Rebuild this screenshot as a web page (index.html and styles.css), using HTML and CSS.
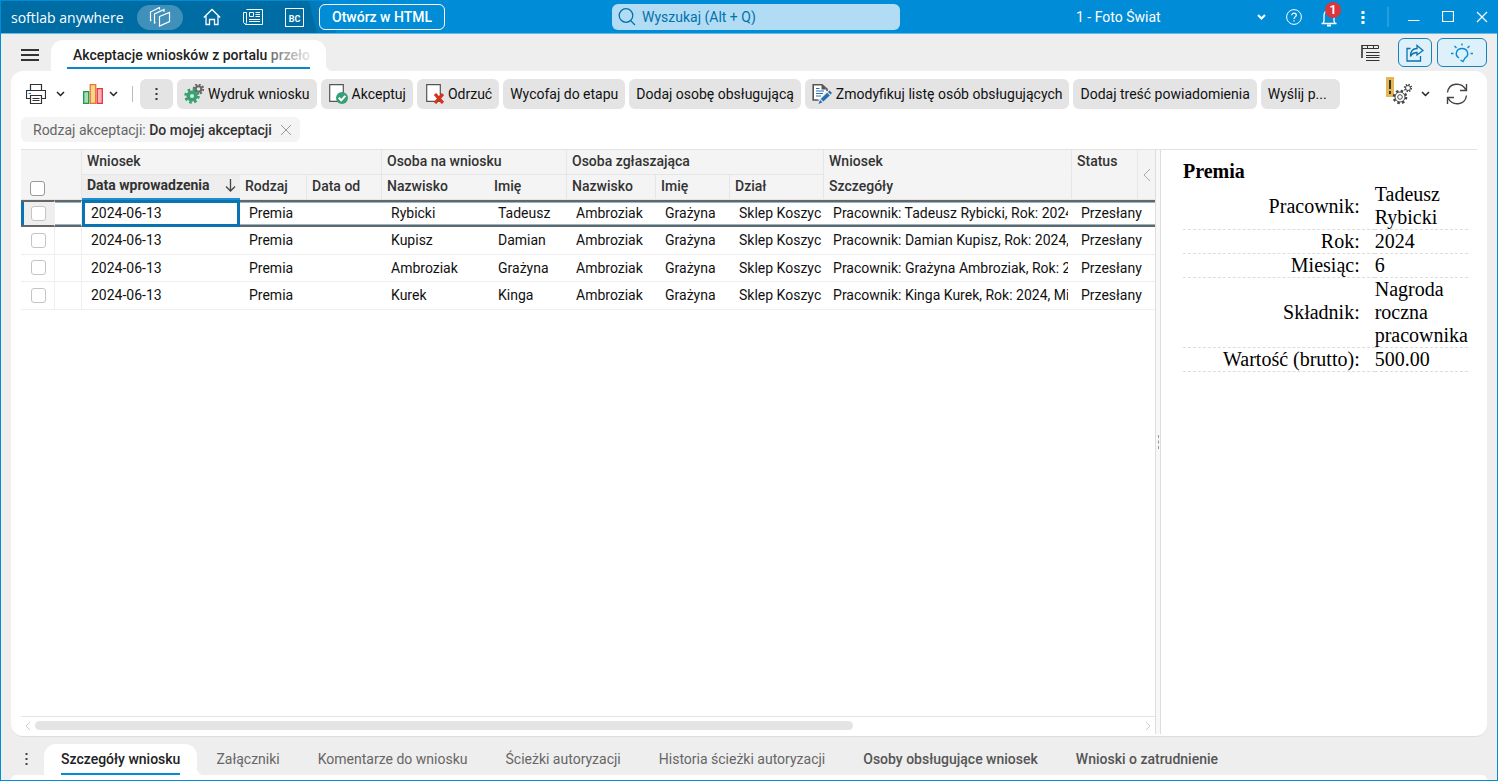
FILE: index.html
```html
<!DOCTYPE html>
<html lang="pl">
<head>
    <meta charset="utf-8">
    <title>softlab anywhere</title>
    <link rel="stylesheet" href="styles.css">
</head>
<body>
    <!-- Pasek tytułu -->
    <header class="topbar">
        <div class="topbar-left">
            <span class="logo">softlab anywhere</span>
            <button class="pill" aria-label="Moduły">
                <svg width="22" height="20" viewBox="0 0 22 20" fill="none" stroke="currentColor" stroke-width="1.200">
                    <path d="M10.500 9.500L20.500 5.500V14.500L10.500 19V9.500ZM6.500 15.500L5.500 16V7L15 2.500V5M2.500 13L1.500 13.500V5L10.500 .5V2.500"/>
                </svg>
            </button>
            <button class="top-icon icon-home" aria-label="Start">
                <svg width="18" height="18" viewBox="0 0 18 18" fill="none" stroke="currentColor">
                    <path d="M.8 9.500L9 1.500L17.200 9.500M3 8V16.500H6.500V11.500H11.500V16.500H15V8" stroke-width="1.300"/>
                </svg>
            </button>
            <button class="top-icon" aria-label="Aktualności">
                <svg width="20" height="16" viewBox="0 0 20 16" fill="none" stroke="currentColor">
                    <path d="M3.500 .5H19.500V15.500H2.500L.5 13.500V3.500H3.500V13.500L2.500 15.500M6.500 3.500H10.500V7.500H6.500ZM12.500 3.500H17M12.500 5.500H17M12.500 7.500H17M6 10.500H17M6 12.500H17"/>
                </svg>
            </button>
            <button class="top-icon bc" aria-label="BC">BC</button>
            <button class="open-html">Otwórz w HTML</button>
        </div>
        <label class="search">
            <svg width="18" height="18" viewBox="0 0 18 18" fill="none" stroke="currentColor" stroke-width="1.300">
                <circle cx="8" cy="7.500" r="6.800"/><path d="M12.500 12.500L17 17"/>
            </svg>
            <input type="text" placeholder="Wyszukaj (Alt + Q)" aria-label="Wyszukaj">
        </label>
        <div class="topbar-right">
            <span class="company">
                <select aria-label="Firma"><option>1 - Foto Świat</option></select>
                <svg width="9" height="6" viewBox="0 0 9 6" fill="none" stroke="currentColor" stroke-width="2"><path d="M1 1L4.500 4.500L8 1"/></svg>
            </span>
            <button class="top-icon" aria-label="Pomoc">
                <svg width="16" height="16" viewBox="0 0 16 16" fill="none" stroke="currentColor">
                    <circle cx="8" cy="8" r="7.400"/><path d="M5.800 6.300C5.800 3.300 10.300 3.500 10.300 6.200C10.300 8 8 7.800 8 10M8 11.300V12.500" stroke-width="1.200"/>
                </svg>
            </button>
            <button class="top-icon bell" aria-label="Powiadomienia">
                <svg width="16" height="19" viewBox="0 0 16 19" fill="none" stroke="currentColor" stroke-width="1.300">
                    <path d="M.5 15.500H15.500M2 15.500L3 13V7.500C3 .5 13 .5 13 7.500V13L14 15.500"/><path d="M6 17.500H10" stroke-width="2"/>
                </svg>
                <span class="badge">1</span>
            </button>
            <button class="top-icon" aria-label="Więcej">
                <svg width="4" height="14" viewBox="0 0 4 14" fill="currentColor"><path d="M.5 1h3v3h-3zM.5 6h3v3h-3zM.5 11h3v3h-3z"/></svg>
            </button>
            <span class="top-sep"></span>
            <button class="top-icon" aria-label="Minimalizuj">
                <svg width="12" height="12" viewBox="0 0 12 12" stroke="currentColor"><path d="M0 9.500H11.500"/></svg>
            </button>
            <button class="top-icon" aria-label="Maksymalizuj">
                <svg width="12" height="12" viewBox="0 0 12 12" fill="none" stroke="currentColor"><path d="M.5 .5H11.500V10.500H.5Z" stroke-width="1.200"/></svg>
            </button>
            <button class="top-icon" aria-label="Zamknij">
                <svg width="12" height="12" viewBox="0 0 12 12" stroke="currentColor" stroke-width="1.200"><path d="M1 1L11 11M11 1L1 11"/></svg>
            </button>
        </div>
    </header>

    <!-- Otwarte okna -->
    <div class="window-tabs">
        <button class="hamburger" aria-label="Menu"><span></span><span></span><span></span></button>
        <a href="#" class="window-tab"><span>Akceptacje wniosków z portalu przełożonego</span></a>
        <div class="window-actions">
            <button class="plain" aria-label="Układ">
                <svg width="19" height="18" viewBox="0 0 19 18" fill="none" stroke="#333">
                    <path d="M1 1V14" stroke-width="1.600"/>
                    <path d="M1 1.500H17.500V4.500H1M6.500 1V5M12.500 1V5"/>
                    <path d="M5 8.500H18.500M5 11.500H18.500M5 13.500H18.500M5 16.500H18.500"/>
                </svg>
            </button>
            <button class="action-btn share" aria-label="Udostępnij">
                <svg width="18" height="18" viewBox="0 0 18 18" fill="none" stroke="currentColor" stroke-width="1.300">
                    <path d="M4.500 4.500H1V17H14.500V12"/><path d="M11 1.500L17 6.500L11 11V8.500C8 8.500 6 9.500 4.500 12.500C4.500 7.500 7 4.500 11 4.500Z"/>
                </svg>
            </button>
            <button class="action-btn bulb" aria-label="Podpowiedzi">
                <svg width="22" height="20" viewBox="0 0 22 20" fill="none" stroke="currentColor" stroke-width="1.400">
                    <path d="M8 15C3 12 5.500 5.500 11 5.500C16.500 5.500 19 12 14 15L12 18.500L9.500 17M11 .5V2.500M3.500 3L5.500 5M18.500 3L16.500 5M0 10.500H2.500M19.500 10.500H22"/>
                </svg>
            </button>
        </div>
    </div>

    <main class="panel">
        <div class="toolbar">
            <button class="plain" aria-label="Drukuj">
                <svg width="20" height="20" viewBox="0 0 20 20" fill="none" stroke="#333">
                    <path d="M4.500 6.500V.5H15.500V6.500M4.500 14.500H.5V6.500H19.500V14.500H15.500M4.500 11.500H15.500V19.500H4.500ZM6.500 14.500H13.500M6.500 16.500H13.500" stroke-width="1.200"/>
                    <path d="M2.500 9.500H5" stroke="#0a84d0"/>
                </svg>
                <svg class="chev" width="9" height="6" viewBox="0 0 9 6" fill="none" stroke="#222" stroke-width="1.500"><path d="M1 1L4.500 4.500L8 1"/></svg>
            </button>
            <button class="plain chart" aria-label="Wykres">
                <svg width="20" height="20" viewBox="0 0 20 20" stroke-width="1.300">
                    <path d="M.7 7.700H5.700V19.300H.7Z" fill="#a8dcb8" stroke="#179c4c"/>
                    <path d="M7.200 .7H12.700V19.300H7.200Z" fill="#fbd38c" stroke="#e8772e"/>
                    <path d="M14.200 4.700H19.300V19.300H14.200Z" fill="#f6b3b6" stroke="#e5353f"/>
                </svg>
                <svg class="chev" width="9" height="6" viewBox="0 0 9 6" fill="none" stroke="#222" stroke-width="1.500"><path d="M1 1L4.500 4.500L8 1"/></svg>
            </button>
            <span class="tool-sep"></span>
            <div class="buttons">
                <button class="btn btn-dots" aria-label="Więcej">
                    <svg width="3" height="13" viewBox="0 0 3 13" fill="#333"><path d="M.5 0h2v2h-2zM.5 5h2v2h-2zM.5 10h2v2h-2z"/></svg>
                </button>
                <button class="btn">
                    <svg width="20" height="20" viewBox="0 0 20 20" fill="none">
                        <circle cx="14.500" cy="5" r="4.500" stroke="#666" stroke-width="2.500" stroke-dasharray="1.800 1.700"/>
                        <circle cx="14.500" cy="5" r="2.800" stroke="#666" stroke-width="2"/>
                        <circle cx="8" cy="12" r="6" stroke="#36a171" stroke-width="3.500" stroke-dasharray="2.400 2.300"/>
                        <circle cx="8" cy="12" r="3.800" fill="#e4e4e4" stroke="#36a171" stroke-width="3.600"/>
                    </svg>
                    Wydruk wniosku
                </button>
                <button class="btn">
                    <svg width="20" height="20" viewBox="0 0 20 20">
                        <path d="M1.700 .7H15.300V17.300H1.700Z" fill="#fff" stroke="#555" stroke-width="1.200"/>
                        <circle cx="14" cy="14" r="6" fill="#369f78"/>
                        <path d="M10.800 13.800L13.200 16.300L17.300 11.800" fill="none" stroke="#fff" stroke-width="2"/>
                    </svg>
                    Akceptuj
                </button>
                <button class="btn">
                    <svg width="20" height="20" viewBox="0 0 20 20">
                        <path d="M2.700 .7H16.300V17.300H2.700Z" fill="#fff" stroke="#555" stroke-width="1.200"/>
                        <path d="M11 10L19 19M19 10L11 19" stroke="#d2311c" stroke-width="3.200"/>
                    </svg>
                    Odrzuć
                </button>
                <button class="btn">Wycofaj do etapu</button>
                <button class="btn">Dodaj osobę obsługującą</button>
                <button class="btn">
                    <svg width="20" height="20" viewBox="0 0 20 20">
                        <path d="M6.500 16H1.200V.8H10L15 5V7" fill="#fff" stroke="#555" stroke-width="1.600"/>
                        <path d="M9.500 1V5.500H14.500Z" fill="#555"/>
                        <path d="M4 4.500H7.500M4 7H12M4 9.500H11M4 12H9" stroke="#2d70b3" stroke-width="1.100"/>
                        <path d="M17.500 6.500L20 9L18.500 10.500L16 8ZM15.200 8.800L17.800 11.400L11.300 17.500L8.800 15ZM8 16L10.500 18.300L6.500 20Z" fill="#256fb5"/>
                    </svg>
                    Zmodyfikuj listę osób obsługujących
                </button>
                <button class="btn">Dodaj treść powiadomienia</button>
                <button class="btn btn-last">Wyślij p...</button>
            </div>
            <button class="plain settings" aria-label="Ustawienia">
                <svg width="26" height="34" viewBox="0 0 26 34" fill="none" stroke="#444">
                    <path d="M0 0H8V20H0Z" fill="#e4b755" stroke="none"/>
                    <path d="M4 3V12M4 14V17" stroke="#3d3520" stroke-width="2"/>
                    <circle cx="14" cy="20" r="6" stroke-width="2.600" stroke-dasharray="2.400 2.310"/>
                    <circle cx="14" cy="20" r="5" fill="#fff"/><circle cx="14" cy="20" r="2.300"/>
                    <circle cx="22" cy="11" r="3.200" stroke-width="2" stroke-dasharray="1.300 1.210"/>
                    <circle cx="22" cy="11" r="2.500" fill="#fff"/>
                </svg>
                <svg class="chev" width="9" height="6" viewBox="0 0 9 6" fill="none" stroke="#222" stroke-width="1.500"><path d="M1 1L4.500 4.500L8 1"/></svg>
            </button>
            <button class="plain" aria-label="Odśwież">
                <svg width="22" height="22" viewBox="0 0 22 22" fill="none" stroke="#444" stroke-width="1.400">
                    <path d="M1.500 9.500C3 -.5 15.500 -1.500 20 7M20.500 1V7.500H14M20.500 12.500C19 22.500 6.500 23.500 2 15M1.500 21V14.500H8"/>
                </svg>
            </button>
        </div>

        <div class="filters">
            <div class="chip">
                <span>Rodzaj akceptacji: <b>Do mojej akceptacji</b></span>
                <button aria-label="Usuń filtr">
                    <svg width="12" height="12" viewBox="0 0 12 12" stroke="#999"><path d="M1 1L11 11M11 1L1 11"/></svg>
                </button>
            </div>
        </div>

        <div class="content">
            <section class="grid-pane">
                <table class="grid">
                    <colgroup>
                        <col class="c-check"><col class="c-mark"><col class="c-date"><col class="c-kind"><col class="c-from">
                        <col class="c-name"><col class="c-first"><col class="c-rname"><col class="c-rfirst"><col class="c-dept">
                        <col class="c-details"><col class="c-status"><col class="c-more">
                    </colgroup>
                    <thead>
                        <tr>
                            <th colspan="2" rowspan="2" class="check-head"><input type="checkbox" aria-label="Zaznacz wszystkie"></th>
                            <th colspan="3">Wniosek</th>
                            <th colspan="2">Osoba na wniosku</th>
                            <th colspan="3">Osoba zgłaszająca</th>
                            <th class="no-line">Wniosek</th>
                            <th rowspan="2" class="status-head">Status</th>
                            <th rowspan="2" class="more-head">
                                <button aria-label="Zwiń"><svg width="8" height="14" viewBox="0 0 8 14" fill="none" stroke="#aaa"><path d="M7 1L1 7L7 13"/></svg></button>
                            </th>
                        </tr>
                        <tr>
                            <th class="sorted">
                                <div><span>Data wprowadzenia</span>
                                <svg width="11" height="13" viewBox="0 0 11 13" fill="none" stroke="#444" stroke-width="1.300"><path d="M5.500 0V12M1 7.500L5.500 12L10 7.500"/></svg></div>
                            </th>
                            <th>Rodzaj</th>
                            <th>Data od</th>
                            <th class="no-side">Nazwisko</th>
                            <th>Imię</th>
                            <th>Nazwisko</th>
                            <th>Imię</th>
                            <th>Dział</th>
                            <th>Szczegóły</th>
                        </tr>
                    </thead>
                    <tbody>
                        <tr class="selected">
                            <td><input type="checkbox" aria-label="Rybicki"></td><td></td>
                            <td class="focused">2024-06-13</td><td>Premia</td><td></td><td>Rybicki</td><td>Tadeusz</td>
                            <td>Ambroziak</td><td>Grażyna</td><td>Sklep Koszyc</td>
                            <td><div class="clip">Pracownik: Tadeusz Rybicki, Rok: 2024</div></td><td colspan="2">Przesłany</td>
                        </tr>
                        <tr>
                            <td><input type="checkbox" aria-label="Kupisz"></td><td></td>
                            <td>2024-06-13</td><td>Premia</td><td></td><td>Kupisz</td><td>Damian</td>
                            <td>Ambroziak</td><td>Grażyna</td><td>Sklep Koszyc</td>
                            <td><div class="clip">Pracownik: Damian Kupisz, Rok: 2024,</div></td><td colspan="2">Przesłany</td>
                        </tr>
                        <tr>
                            <td><input type="checkbox" aria-label="Ambroziak"></td><td></td>
                            <td>2024-06-13</td><td>Premia</td><td></td><td>Ambroziak</td><td>Grażyna</td>
                            <td>Ambroziak</td><td>Grażyna</td><td>Sklep Koszyc</td>
                            <td><div class="clip">Pracownik: Grażyna Ambroziak, Rok: 20</div></td><td colspan="2">Przesłany</td>
                        </tr>
                        <tr>
                            <td><input type="checkbox" aria-label="Kurek"></td><td></td>
                            <td>2024-06-13</td><td>Premia</td><td></td><td>Kurek</td><td>Kinga</td>
                            <td>Ambroziak</td><td>Grażyna</td><td>Sklep Koszyc</td>
                            <td><div class="clip">Pracownik: Kinga Kurek, Rok: 2024, Mie</div></td><td colspan="2">Przesłany</td>
                        </tr>
                    </tbody>
                </table>
                <div class="scrollbar">
                    <svg width="6" height="8" viewBox="0 0 6 8" fill="none" stroke="#ccc"><path d="M5 0L1 4L5 8"/></svg>
                    <div class="track"><div class="thumb"></div></div>
                    <svg width="6" height="8" viewBox="0 0 6 8" fill="none" stroke="#ccc"><path d="M1 0L5 4L1 8"/></svg>
                </div>
            </section>
            <div class="splitter"><span></span></div>
            <aside class="details">
                <h2>Premia</h2>
                <table>
                    <tr><th>Pracownik:</th><td>Tadeusz Rybicki</td></tr>
                    <tr><th>Rok:</th><td>2024</td></tr>
                    <tr><th>Miesiąc:</th><td>6</td></tr>
                    <tr><th>Składnik:</th><td>Nagroda roczna pracownika</td></tr>
                    <tr><th>Wartość (brutto):</th><td>500.00</td></tr>
                </table>
            </aside>
        </div>
    </main>

    <!-- Zakładki szczegółów -->
    <nav class="bottom-tabs">
        <button class="plain dots" aria-label="Zakładki">
            <svg width="3" height="13" viewBox="0 0 3 13" fill="#444"><path d="M.5 0h2v2h-2zM.5 5h2v2h-2zM.5 10h2v2h-2z"/></svg>
        </button>
        <a href="#" class="active"><span>Szczegóły wniosku</span></a>
        <a href="#">Załączniki</a>
        <a href="#">Komentarze do wniosku</a>
        <a href="#">Ścieżki autoryzacji</a>
        <a href="#">Historia ścieżki autoryzacji</a>
        <a href="#" class="filled">Osoby obsługujące wniosek</a>
        <a href="#" class="filled">Wnioski o zatrudnienie</a>
    </nav>
    <div class="bottom-panel"></div>
</body>
</html>
```

FILE: styles.css
```css
* {
    box-sizing: border-box;
}
body {
    margin: 0;
    height: 100vh;
    display: flex;
    flex-direction: column;
    border: 1px solid #008cd6;
    background-color: #eee;
    font-family: Roboto, sans-serif;
    font-size: 14px;
    color: #222;
    overflow: hidden;
}
button, select, input {
    font: inherit;
    color: inherit;
}
button {
    padding: 0;
    border: none;
    background: none;
    cursor: pointer;
}
svg {
    display: block;
    flex: none;
}

/* Pasek tytułu */
.topbar {
    display: grid;
    grid-template-columns: minmax(0, 1fr) 288px 597px;
    align-items: center;
    flex: none;
    height: 33px;
    padding-left: 10px;
    border-bottom: 1px solid #66bae7;
    background: linear-gradient(75deg, #006ca4 305px, #0079b8 306px, #0080c3 324px, #008cd6 325px);
    color: white;
}
.topbar-left, .topbar-right {
    display: flex;
    align-items: center;
}
.logo {
    width: 116px;
    margin-right: 10px;
    font-family: "Open Sans", sans-serif;
    font-size: 14px;
    white-space: nowrap;
}
.pill {
    display: flex;
    align-items: center;
    justify-content: center;
    width: 46px;
    height: 25px;
    margin-right: 20px;
    border-radius: 13px;
    background-color: #4090bc;
}
.top-icon {
    display: flex;
    align-items: center;
    justify-content: center;
    position: relative;
}
.topbar-left .top-icon {
    margin-right: 22px;
}
.topbar-left .bc {
    align-items: flex-end;
    width: 19px;
    height: 19px;
    margin-right: 15px;
    border: 1px solid white;
    font-size: 9px;
    font-weight: bold;
    line-height: 13px;
}
.open-html {
    height: 26px;
    padding: 0 12px;
    border: 1px solid white;
    border-radius: 6px;
    background-color: #008cd6;
    font-weight: 500;
}
.search {
    display: flex;
    align-items: center;
    gap: 4px;
    height: 26px;
    padding: 0 6px;
    border-radius: 6px;
    background-color: #b2dcf3;
    color: #0072ad;
}
.search input {
    flex: 1;
    min-width: 0;
    border: none;
    background: none;
    outline: none;
}
.search input::placeholder {
    color: #0072ad;
    opacity: 1;
}
.topbar-right {
    justify-content: flex-end;
    padding-right: 9px;
}
.company {
    display: flex;
    align-items: center;
    width: 190px;
    margin-right: 20px;
}
.company select {
    flex: 1;
    appearance: none;
    padding: 0;
    border: none;
    outline: none;
    background: none;
}
.bell {
    margin-left: 19px;
    margin-right: 24px;
}
.badge {
    position: absolute;
    left: 4px;
    top: -6px;
    width: 16px;
    height: 16px;
    border-radius: 8px;
    background-color: #d9363e;
    font-size: 12px;
    font-weight: bold;
    line-height: 16px;
}
.top-sep {
    width: 2px;
    height: 20px;
    margin: 0 19px 0 22px;
    background-color: #269ddc;
}
.top-sep ~ .top-icon + .top-icon {
    margin-left: 22px;
}

/* Okna */
.window-tabs {
    display: flex;
    align-items: flex-end;
    flex: none;
    height: 37px;
    padding: 0 10px;
}
.hamburger {
    display: flex;
    flex-direction: column;
    gap: 3px;
    width: 18px;
    margin: 0 12px 10px 10px;
}
.hamburger span {
    height: 2px;
    background-color: #333;
}
.window-tab {
    position: relative;
    width: 275px;
    height: 31px;
    padding: 0 16px;
    border-radius: 12px 12px 0 0;
    background-color: white;
    color: #222;
    font-weight: 500;
    text-decoration: none;
}
.window-tab span {
    display: block;
    height: 29px;
    padding-left: 6px;
    border-bottom: 2px solid #0a86cc;
    overflow: hidden;
    line-height: 30px;
    white-space: nowrap;
}
.window-tab span::after {
    content: "";
    position: absolute;
    right: 16px;
    top: 4px;
    width: 42px;
    height: 20px;
    background: linear-gradient(to right, rgba(255, 255, 255, 0.3), rgba(255, 255, 255, 0.9));
}
.window-tab::after, .bottom-tabs .active::after {
    content: "";
    position: absolute;
    left: 100%;
    bottom: 0;
    width: 8px;
    height: 8px;
    background: radial-gradient(circle at 8px 0, transparent 8px, white 9px);
}
.window-actions {
    display: flex;
    align-items: center;
    gap: 5px;
    margin-left: auto;
    padding-bottom: 4px;
}
.plain {
    display: flex;
    align-items: center;
}
.window-actions .plain {
    margin-right: 13px;
}
.action-btn {
    display: flex;
    align-items: center;
    justify-content: center;
    width: 34px;
    height: 29px;
    border: 1px solid #1482bd;
    border-radius: 6px;
    background-color: #def0fa;
    color: #0873ad;
}
.bulb {
    width: 50px;
    color: #008cd6;
}

/* Panel */
.panel {
    display: flex;
    flex-direction: column;
    flex: 1;
    min-height: 0;
    margin: 0 10px;
    padding: 8px 10px 2px;
    border-bottom: 1px solid #ddd;
    border-radius: 12px;
    background-color: white;
}
.toolbar {
    display: flex;
    align-items: center;
    height: 30px;
    padding: 0 9px 0 5px;
}
.chev {
    margin-left: 10px;
}
.chart {
    margin-left: 18px;
}
.chart .chev, .settings .chev {
    margin-left: 9px;
}
.chart .chev {
    margin-left: 6px;
}
.tool-sep {
    width: 1px;
    height: 16px;
    margin: 0 7px 0 14px;
    background-color: #bbb;
}
.buttons {
    display: flex;
    gap: 4px;
}
.btn {
    display: flex;
    align-items: center;
    gap: 4px;
    height: 30px;
    padding: 0 7px;
    border-radius: 6px;
    background-color: #e4e4e4;
    color: #111;
    white-space: nowrap;
}
.btn-dots {
    justify-content: center;
    width: 33px;
}
.btn-last {
    padding-right: 13px;
}
.settings {
    margin-left: auto;
    margin-right: 16px;
}
.filters {
    display: flex;
    padding: 8px 0 7px;
}
.chip {
    display: flex;
    align-items: center;
    gap: 8px;
    height: 25px;
    padding: 0 8px 0 12px;
    border-radius: 6px;
    background-color: #f4f4f4;
    color: #666;
}
.chip b {
    color: #333;
    font-weight: 500;
}
.content {
    display: flex;
    flex: 1;
    min-height: 0;
    border-top: 1px solid #e2e2e2;
}

/* Tabela */
.grid-pane {
    display: flex;
    flex-direction: column;
    flex: 1;
    min-width: 0;
}
.grid {
    width: 100%;
    table-layout: fixed;
    border-collapse: separate;
    border-spacing: 0;
}
.c-check { width: 34px; }
.c-mark { width: 27px; }
.c-date { width: 158px; }
.c-kind { width: 67px; }
.c-from { width: 75px; }
.c-name { width: 107px; }
.c-first { width: 78px; }
.c-rname { width: 89px; }
.c-rfirst { width: 74px; }
.c-dept { width: 94px; }
.c-status { width: 66px; }
.c-more { width: 17px; }
.grid th {
    height: 25px;
    padding: 0 0 3px 5px;
    border-right: 1px solid #e6e6e6;
    border-bottom: 1px solid #e6e6e6;
    background-color: #f4f4f4;
    color: #333;
    font-weight: 500;
    text-align: left;
    white-space: nowrap;
}
.grid th.no-line {
    border-bottom-color: #f4f4f4;
}
.grid th.no-side {
    border-right-color: #f4f4f4;
}
.grid th.check-head {
    padding: 0 0 3px 9px;
    vertical-align: bottom;
}
.grid th.status-head {
    padding-top: 3px;
    vertical-align: top;
}
.grid th.more-head {
    padding: 0;
    border-right: none;
}
.more-head button {
    display: block;
    margin: 0 auto;
}
.grid th.sorted {
    border-right: none;
    border-bottom: 2px solid #1b8fd0;
    background-color: #eee;
    font-weight: bold;
}
.sorted div {
    display: flex;
    align-items: center;
    justify-content: space-between;
    padding-right: 4px;
}
.grid td {
    height: 27px;
    padding: 0 4px 1px 9px;
    border-bottom: 1px solid #eee;
    color: #111;
    white-space: nowrap;
}
.grid tr:nth-child(2) td, .grid tr:nth-child(4) td {
    height: 28px;
}
.grid td:nth-child(-n+2) {
    border-right: 1px solid #eee;
}
.grid td:first-child {
    padding-left: 10px;
}
.clip {
    overflow: hidden;
}
.grid .selected td {
    border-top: 2px solid #666;
    border-bottom: 2px solid #666;
    box-shadow: inset 0 1px #8db9cf, inset 0 -1px #8db9cf;
}
.grid .selected td:first-child {
    background-color: #eee;
    box-shadow: inset 3px 0 #0a73b0;
}
.grid .selected td.focused {
    border-color: #0a73b0;
    box-shadow: inset 3px 0 #0a73b0, inset -3px 0 #0a73b0, inset 0 1px #0a73b0, inset 0 -1px #0a73b0;
}
.grid input {
    display: block;
    appearance: none;
    width: 15px;
    height: 15px;
    margin: 0;
    border: 1px solid #c4c4c4;
    border-radius: 3px;
    background-color: white;
}
.grid th input {
    border-color: #999;
}
.scrollbar {
    display: flex;
    align-items: center;
    gap: 4px;
    height: 18px;
    margin-top: auto;
    padding: 0 4px;
    border-top: 1px solid #e2e2e2;
}
.track {
    flex: 1;
}
.thumb {
    width: 74%;
    height: 9px;
    border-radius: 5px;
    background-color: #e4e4e4;
}
.splitter {
    display: flex;
    align-items: center;
    justify-content: center;
    width: 6px;
    border-left: 1px solid #ddd;
    border-right: 1px solid #ddd;
    background-color: #f9f8f7;
}
.splitter span {
    height: 14px;
    border-left: 1px dashed #999;
}

/* Szczegóły */
.details {
    width: 316px;
    padding: 10px 9px 0 22px;
    color: black;
    font-family: "Liberation Serif", serif;
    font-size: 20px;
    line-height: 23px;
}
.details h2 {
    margin: 0;
    font-size: 20px;
}
.details table {
    width: 100%;
    border-spacing: 0;
}
.details th, .details td {
    padding: 0;
    border-bottom: 1px dashed #ddd;
}
.details th {
    padding-right: 15px;
    font-weight: normal;
    text-align: right;
    white-space: nowrap;
}
.details td {
    width: 93px;
}

/* Dolne zakładki */
.bottom-tabs {
    display: flex;
    align-items: center;
    flex: none;
    height: 38px;
    padding: 7px 10px 0;
}
.bottom-tabs .dots {
    width: 19px;
    margin-left: 14px;
}
.bottom-tabs a {
    padding: 0 19px;
    color: #666;
    line-height: 29px;
    text-decoration: none;
    white-space: nowrap;
}
.bottom-tabs .filled {
    color: #555;
    font-weight: 500;
}
.bottom-tabs .active {
    position: relative;
    padding: 0 17px;
    border-radius: 12px 12px 0 0;
    background-color: white;
    color: #222;
    font-weight: 500;
}
.active span {
    display: block;
    padding-top: 2px;
    border-bottom: 2px solid #008cd6;
    line-height: 27px;
}
.bottom-panel {
    flex: none;
    height: 5px;
    margin: 0 10px;
    border-radius: 8px 8px 0 0;
    background-color: white;
}
```
